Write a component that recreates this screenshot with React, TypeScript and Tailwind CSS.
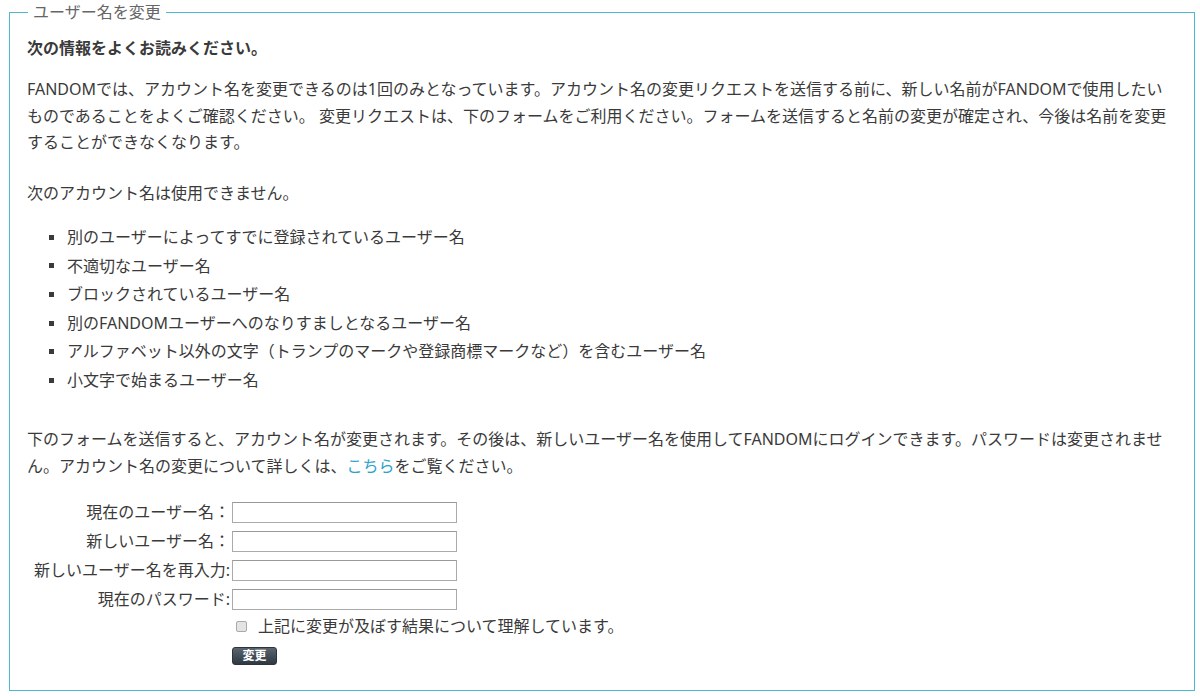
const BLOCKED_NAMES = [
  '別のユーザーによってすでに登録されているユーザー名',
  '不適切なユーザー名',
  'ブロックされているユーザー名',
  '別のFANDOMユーザーへのなりすましとなるユーザー名',
  'アルファベット以外の文字（トランプのマークや登録商標マークなど）を含むユーザー名',
  '小文字で始まるユーザー名',
];

const FIELDS = [
  { label: '現在のユーザー名：', type: 'text' },
  { label: '新しいユーザー名：', type: 'text' },
  { label: '新しいユーザー名を再入力:', type: 'text' },
  { label: '現在のパスワード:', type: 'password' },
];

export default function App() {
  return (
    <div
      className="min-h-[696px] bg-white pl-[9px] pr-[5px] pt-[1px] text-[16px] text-[#3a3a3a]"
      style={{ fontFamily: '"Noto Sans", "Noto Sans CJK JP", sans-serif' }}
    >
      <fieldset className="border border-[#4db8d2] pl-[17px] pr-[16px] pb-[25px]">
        <legend className="ml-[1px] px-[5px] text-[16px] leading-[22px] text-[#666]">ユーザー名を変更</legend>

        <p className="mt-[12px] font-bold leading-[26px]">次の情報をよくお読みください。</p>

        <p className="mt-[15px] leading-[26.5px]">
          FANDOMでは、アカウント名を変更できるのは1回のみとなっています。アカウント名の変更リクエストを送信する前に、新しい名前がFANDOMで使用したいものであることをよくご確認ください。
          変更リクエストは、下のフォームをご利用ください。フォームを送信すると名前の変更が確定され、今後は名前を変更することができなくなります。
        </p>

        <p className="mt-[24px] leading-[26.5px]">次のアカウント名は使用できません。</p>

        <ul className="mt-[17px] pl-[22px]">
          {BLOCKED_NAMES.map((name) => (
            <li key={name} className="flex items-center leading-[28.6px]">
              <span className="mr-[13px] inline-block h-[5px] w-[5px] bg-[#3a3a3a]" />
              {name}
            </li>
          ))}
        </ul>

        <p className="mt-[31px] leading-[27px]">
          下のフォームを送信すると、アカウント名が変更されます。その後は、新しいユーザー名を使用してFANDOMにログインできます。パスワードは変更されません。アカウント名の変更について詳しくは、
          <a href="#" className="text-[#2ba3cb]">こちら</a>
          をご覧ください。
        </p>

        <div className="mt-[22px] grid grid-cols-[205px_225px] gap-y-[8px]">
          {FIELDS.map((f) => (
            <div key={f.label} className="contents">
              <label className="h-[21px] pr-[2px] text-right leading-[21px]">{f.label}</label>
              <input
                type={f.type}
                className="h-[21px] w-[225px] border border-[#aaa] border-t-[#999] bg-white px-1 text-[14px] outline-none"
              />
            </div>
          ))}
        </div>

        <label className="ml-[209px] mt-[6px] flex h-[21px] items-center">
          <input
            type="checkbox"
            className="h-[11px] w-[11px] appearance-none rounded-[2px] border border-[#a9a9a9] bg-[#e4e4e4]"
          />
          <span className="ml-[11px] leading-[21px]">上記に変更が及ぼす結果について理解しています。</span>
        </label>

        <button
          type="button"
          className="ml-[205px] mt-[10px] block h-[18px] w-[45px] rounded-[3px] border border-[#2c343b] bg-gradient-to-b from-[#5a6570] to-[#2f3943] text-[12px] font-bold leading-[16px] text-white"
        >
          変更
        </button>
      </fieldset>
    </div>
  );
}
